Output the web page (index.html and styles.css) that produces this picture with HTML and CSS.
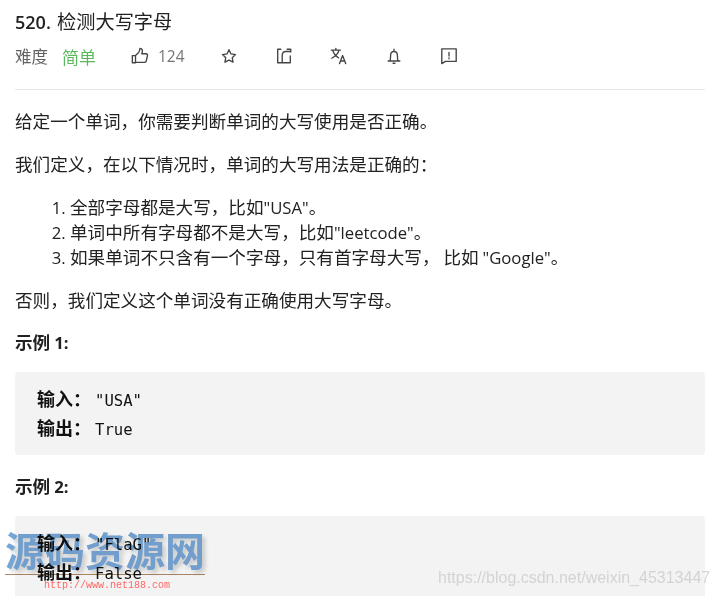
FILE: index.html
```html
<!DOCTYPE html>
<html lang="zh">
<head>
<meta charset="utf-8">
<title>520. 检测大写字母</title>
<link rel="stylesheet" href="styles.css">
</head>
<body>
<main class="page">
  <header class="head">
    <h1 class="title"><b>520.</b> 检测大写字母</h1>
    <div class="meta">
      <span class="label">难度</span>
      <span class="easy">简单</span>
      <span class="likes">
        <svg class="icon" viewBox="0 0 20 20"><path d="M1.500 9.500h3.500v8h-3.500zM5 9.500l3.500-3.500c.8-1 1.200-2.500 1.500-4.500 2 0 3 1.500 2.500 4l-.5 2h5c1 0 1.500 1 1.300 2l-1.300 6c-.2 1-1 1.500-2 1.500H5"/></svg>
        <span class="count">124</span>
      </span>
      <svg class="icon star" viewBox="0 0 20 20"><path d="M10 3l2.200 4.700 5 .7-3.600 3.500.9 5-4.500-2.400-4.500 2.400.9-5-3.600-3.500 5-.7z"/></svg>
      <svg class="icon share" viewBox="0 0 20 20"><path d="M6.500 2.500H3v15h14V10M8 17.500v-8c0-3 1.500-4.500 4-4.500H17.500M13.500 2.500h4v3"/></svg>
      <svg class="icon translate" viewBox="0 0 20 20"><path d="M1.500 3.500h10M6.500 1.500v2M3 3.500c1 4 4 7 6.500 8.500M10 3.500c-1 4-4 7-8 9M10.500 18.500l3.500-9 3.500 9M11.700 15.500h4.600"/></svg>
      <svg class="icon bell" viewBox="0 0 20 20"><path d="M3.500 15.500h13M5.500 15.500c.7-1.500.7-3 .7-6 0-2.500 1.600-4.500 3.800-4.500s3.800 2 3.800 4.500c0 3 0 4.500.7 6M10 2.500v2.500M9 18h2"/></svg>
      <svg class="icon report" viewBox="0 0 20 20"><path d="M2 2h16v14H6l-4 2.500zM10 6v4M10 12v1"/></svg>
    </div>
  </header>
  <article class="content">
    <p>给定一个单词，你需要判断单词的大写使用是否正确。</p>
    <p>我们定义，在以下情况时，单词的大写用法是正确的：</p>
    <ol>
      <li>全部字母都是大写，比如<span class="lat">"USA"</span>。</li>
      <li>单词中所有字母都不是大写，比如<span class="lat">"leetcode"</span>。</li>
      <li>如果单词不只含有一个字母，只有首字母大写， 比如 <span class="lat">"Google"</span>。</li>
    </ol>
    <p>否则，我们定义这个单词没有正确使用大写字母。</p>
    <p class="ex"><strong>示例 <span class="lat">1:</span></strong></p>
    <pre><strong>输入：</strong>"USA"
<strong>输出：</strong>True</pre>
    <p class="ex"><strong>示例 <span class="lat">2:</span></strong></p>
    <pre><strong>输入：</strong>"FlaG"
<strong>输出：</strong>False</pre>
  </article>
</main>
<div class="mark">
  <div class="mark-name">源码资源网</div>
  <div class="mark-url">http://www.net188.com</div>
</div>
<div class="csdn">https://blog.csdn.net/weixin_45313447</div>
</body>
</html>
```
FILE: styles.css
```css
* { box-sizing: border-box; }
html, body { margin: 0; height: 596px; overflow: hidden; background: #fff; }
body {
  font-family: "Noto Sans CJK SC", sans-serif;
  color: #212121;
  position: relative;
}
.page { padding: 8px 14px 0 15px; }
.head { border-bottom: 1px solid #e8e8e8; height: 82px; }
.title { margin: 0; font-size: 19.200px; line-height: 26px; font-weight: 400; color: #212121; }
.title b { font-family: "Open Sans", sans-serif; font-size: 18px; line-height: 1; font-weight: 600; margin-right: 2px; }
.meta { display: flex; align-items: center; margin-top: 9px; height: 26px; font-size: 16.500px; }
.label { width: 47px; color: #616161; }
.easy { width: 69px; color: #5cb85c; font-size: 17px; }
.likes { display: flex; align-items: center; gap: 9px; width: 89px; }
.count { color: #757575; font-family: "Open Sans", sans-serif; font-size: 15.500px; }
.icon { width: 18px; height: 18px; fill: none; stroke: #444; stroke-width: 1.500; stroke-linecap: round; stroke-linejoin: round; flex: none; }
.star, .share, .translate, .bell { margin-right: 37px; }
.content { font-size: 17.600px; line-height: 25px; color: #212121; }
.lat { font-family: "Open Sans", sans-serif; font-size: 16.700px; line-height: 1; }
.content p { margin: 0; }
.content > p:first-child { margin-top: 18px; }
.content p + p, .content ol + p { margin-top: 18px; }
.content ol { margin: 18px 0; padding-left: 55px; }
.content li::marker { font-family: "Open Sans", sans-serif; font-size: 16.700px; }
.content .ex { margin-top: 17px; margin-bottom: 18px; }
.content strong { font-weight: 700; }
pre {
  margin: 0 0 18px;
  background: #f3f3f3;
  border-radius: 4px;
  padding: 15px 22px 0;
  height: 83px;
  font-family: "DejaVu Sans Mono", monospace;
  font-size: 15.600px;
  line-height: 28.500px;
  color: #111;
}
pre strong {
  display: inline-block;
  width: 58px;
  font-family: "Noto Sans CJK SC", sans-serif;
  font-size: 18px;
  line-height: 1;
  font-weight: 500;
  color: #111;
}
.mark { position: absolute; left: 5px; top: 525px; width: 200px; pointer-events: none; }
.mark-name {
  font-family: "Noto Sans CJK SC", sans-serif;
  font-size: 40px; line-height: 49px; font-weight: 700;
  color: rgb(118, 166, 214);
  mix-blend-mode: multiply;
  text-shadow: 3px 3px 4px rgba(0,0,0,.18);
  border-bottom: 1px solid #b08a68;
}
.mark-url { font-family: "Liberation Mono", monospace; font-size: 10px; line-height: 21px; color: #f66; padding-left: 39px; }
.csdn {
  position: absolute; left: 438px; top: 568px;
  font-family: "Liberation Sans", sans-serif; font-size: 16px; line-height: 20px;
  color: rgba(190,190,190,.6); white-space: nowrap;
}
```
